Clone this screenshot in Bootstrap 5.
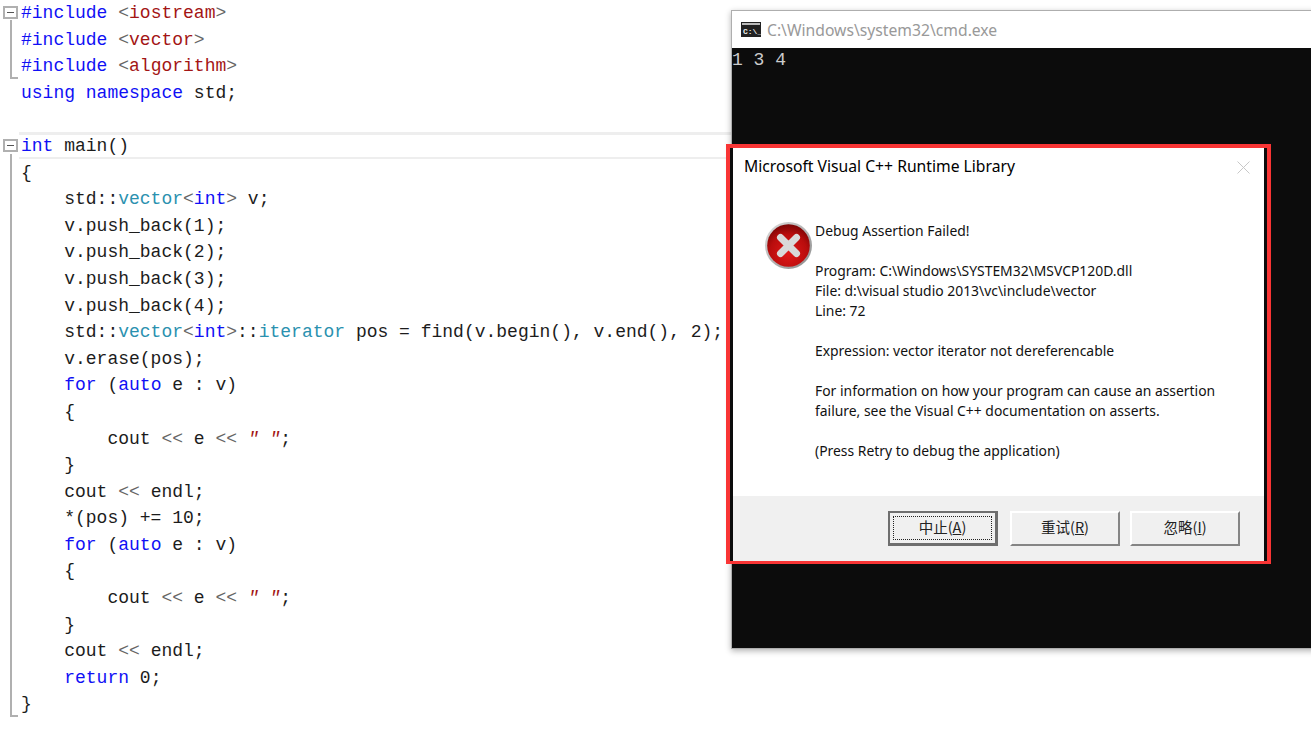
<!DOCTYPE html>
<html lang="en">
<head>
<meta charset="utf-8">
<title>Debug Assertion Failed</title>
<link rel="stylesheet" href="https://cdn.jsdelivr.net/npm/bootstrap@5.3.0/dist/css/bootstrap.min.css">
<style>
html,body{height:741px;overflow:hidden;background:#fff}
.stage{position:relative;width:1311px;height:741px;overflow:hidden}
.editor{margin:0 0 0 19px;font:18px/26.6px "Liberation Mono",monospace;color:#1c1c1c}
.ln{height:26.6px;padding-left:2px;white-space:pre}
.ln-cur{margin-top:-1px;margin-bottom:1px;border-top:3px solid #eee;border-bottom:2px solid #eee;line-height:22px}
.kw{color:#1010f5}.str{color:#a31515;font-style:italic}.inc{color:#a31515}.ty{color:#2b91af}.op{color:#666}
.fold-box{position:absolute;left:3px;width:15px;height:13px;border:2px solid #b0b0b0;background:#fff}
.fold-box::after{content:"";position:absolute;left:2px;right:2px;top:4px;height:1px;background:#555}
.fold-line{position:absolute;left:10px;width:8px;border-left:2px solid #b0b0b0;border-bottom:2px solid #b0b0b0}
.cmd-win{position:absolute;left:731px;top:10px;width:600px;height:639px;background:#0c0c0c;border:1px solid #aeaeae;box-shadow:0 2px 6px rgba(0,0,0,.3)}
.cmd-title{height:37px;background:#fff;color:#999;font:15.7px "Noto Sans",sans-serif;padding-left:9px;gap:6px}
.cmd-out{font:18px/22px "Liberation Mono",monospace;color:#ccc;white-space:pre;padding-top:1px}
.alert-frame{position:absolute;left:726px;top:144px;width:545px;height:420px;border:4px solid #f93535;border-bottom-width:3px;background:#0c0c0c;padding:0 3px}
.dlg{height:100%;background:#fff;font-family:"Noto Sans","Noto Sans CJK SC",sans-serif;color:#111}
.dlg-title{font-size:15.7px;line-height:20px;padding:8px 0 0 11px;height:73px;color:#000}
.dlg-x{position:absolute;right:14px;top:13px}
.dlg-body{flex:1;padding-left:31px;gap:1px}
.dlg-msg{font-size:13.9px;line-height:20px;white-space:pre;margin:0}
.dlg-foot{height:65px;background:#f0f0f0;padding:15px 24px 0 0;gap:10px}
.dlg-btn{width:110px;height:35px;padding:0 0 2px;border-radius:0;border:2px solid;border-color:#fff #858585 #858585 #fff;background:#f0f0f0;color:#222;font:14.5px/1 "Noto Sans CJK SC","Noto Sans",sans-serif;position:relative}
.dlg-btn:hover{background:#f0f0f0;border-color:#fff #858585 #858585 #fff;color:#222}
.dlg-btn-def{border-color:#6e6e6e;border-width:2px 3px 3px 2px;margin-right:2px}
.dlg-btn-def::after{content:"";position:absolute;inset:3px;border:1px dotted #222}
</style>
</head>
<body>
<div class="stage">
<div class="editor">
<div class="ln"><span class="kw">#include</span> <span class="op">&lt;</span><span class="inc">iostream</span><span class="op">&gt;</span></div>
<div class="ln"><span class="kw">#include</span> <span class="op">&lt;</span><span class="inc">vector</span><span class="op">&gt;</span></div>
<div class="ln"><span class="kw">#include</span> <span class="op">&lt;</span><span class="inc">algorithm</span><span class="op">&gt;</span></div>
<div class="ln"><span class="kw">using namespace</span> std;</div>
<div class="ln"> </div>
<div class="ln ln-cur"><span class="kw">int</span> main()</div>
<div class="ln">{</div>
<div class="ln">    std::<span class="ty">vector</span><span class="op">&lt;</span><span class="kw">int</span><span class="op">&gt;</span> v;</div>
<div class="ln">    v.push_back(1);</div>
<div class="ln">    v.push_back(2);</div>
<div class="ln">    v.push_back(3);</div>
<div class="ln">    v.push_back(4);</div>
<div class="ln">    std::<span class="ty">vector</span><span class="op">&lt;</span><span class="kw">int</span><span class="op">&gt;</span>::<span class="ty">iterator</span> pos = find(v.begin(), v.end(), 2);</div>
<div class="ln">    v.erase(pos);</div>
<div class="ln">    <span class="kw">for</span> (<span class="kw">auto</span> e : v)</div>
<div class="ln">    {</div>
<div class="ln">        cout <span class="op">&lt;&lt;</span> e <span class="op">&lt;&lt;</span> <span class="str">" "</span>;</div>
<div class="ln">    }</div>
<div class="ln">    cout <span class="op">&lt;&lt;</span> endl;</div>
<div class="ln">    *(pos) += 10;</div>
<div class="ln">    <span class="kw">for</span> (<span class="kw">auto</span> e : v)</div>
<div class="ln">    {</div>
<div class="ln">        cout <span class="op">&lt;&lt;</span> e <span class="op">&lt;&lt;</span> <span class="str">" "</span>;</div>
<div class="ln">    }</div>
<div class="ln">    cout <span class="op">&lt;&lt;</span> endl;</div>
<div class="ln">    <span class="kw">return</span> 0;</div>
<div class="ln">}</div>
</div>

<div class="fold-box" style="top:6px"></div>
<div class="fold-line" style="top:20px;height:59px"></div>
<div class="fold-box" style="top:139px"></div>
<div class="fold-line" style="top:154px;height:563px"></div>

<div class="cmd-win">
  <div class="cmd-title d-flex align-items-center">
    <svg width="20" height="15" viewBox="0 0 20 15"><rect width="20" height="15" fill="#222"/><rect x="1" y="1" width="18" height="2" fill="#bbb"/><text x="2" y="11.5" font-family="Liberation Mono" font-size="8" font-weight="700" fill="#eee">C:\_</text></svg>
    <span>C:\Windows\system32\cmd.exe</span>
  </div>
  <div class="cmd-out">1 3 4</div>
</div>

<div class="alert-frame">
  <div class="dlg d-flex flex-column position-relative">
    <div class="dlg-title">Microsoft Visual C++ Runtime Library</div>
    <svg class="dlg-x" width="13" height="13" viewBox="0 0 13 13"><path d="M.5.5l12 12M12.5.5l-12 12" stroke="#c8c8c8" fill="none"/></svg>
    <div class="dlg-body d-flex">
      <svg width="50" height="50" viewBox="0 0 50 50" class="flex-shrink-0">
        <defs>
          <radialGradient id="rg" cx=".5" cy=".68" r=".68"><stop offset="0" stop-color="#e01818"/><stop offset=".65" stop-color="#b90d0d"/><stop offset="1" stop-color="#7a0505"/></radialGradient>
          <linearGradient id="ring" x1="0" y1="0" x2="1" y2="1"><stop offset="0" stop-color="#dedede"/><stop offset="1" stop-color="#8a8a8a"/></linearGradient>
        </defs>
        <circle cx="24.5" cy="24.5" r="23.5" fill="url(#ring)"/>
        <circle cx="24.5" cy="24.5" r="21.3" fill="url(#rg)"/>
        <path d="M16.5 16.5l16 16M32.5 16.5l-16 16" stroke="#d9d9d9" stroke-width="7" stroke-linecap="round"/>
      </svg>
      <p class="dlg-msg">Debug Assertion Failed!

Program: C:\Windows\SYSTEM32\MSVCP120D.dll
File: d:\visual studio 2013\vc\include\vector
Line: 72

Expression: vector iterator not dereferencable

For information on how your program can cause an assertion
failure, see the Visual C++ documentation on asserts.

(Press Retry to debug the application)</p>
    </div>
    <div class="dlg-foot d-flex justify-content-end align-items-start">
      <button type="button" class="btn dlg-btn dlg-btn-def">中止(<u>A</u>)</button>
      <button type="button" class="btn dlg-btn">重试(<u>R</u>)</button>
      <button type="button" class="btn dlg-btn">忽略(<u>I</u>)</button>
    </div>
  </div>
</div>
</div>
<script src="https://cdn.jsdelivr.net/npm/bootstrap@5.3.0/dist/js/bootstrap.bundle.min.js"></script>
</body>
</html>
